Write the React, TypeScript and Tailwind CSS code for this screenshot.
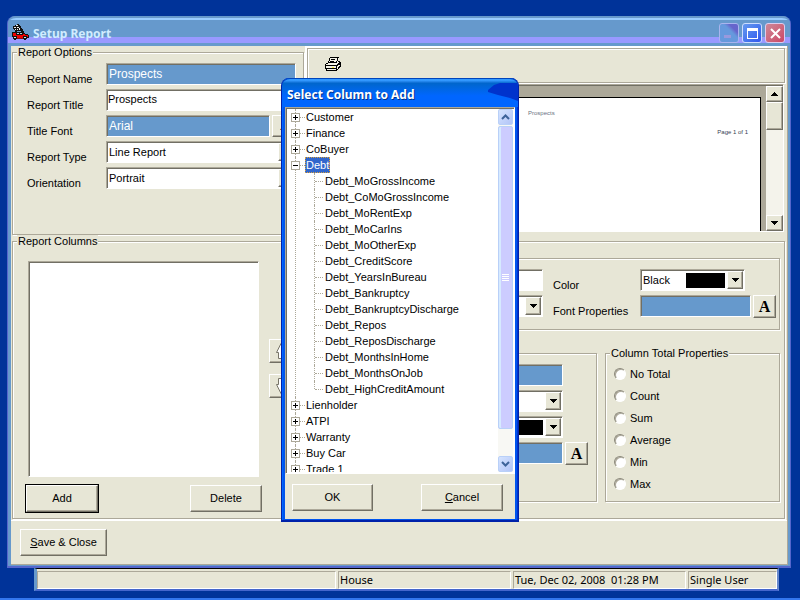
import React from "react";

const sunken =
  "border border-t-[#aca899] border-l-[#aca899] border-r-white border-b-white shadow-[inset_1px_1px_0_#716f64]";
const raised =
  "border border-t-white border-l-white border-r-[#716f64] border-b-[#716f64] shadow-[inset_-1px_-1px_0_#aca899] bg-[#e7e6d6]";
const etched = "border border-[#aca899] shadow-[1px_1px_0_#fff,inset_1px_1px_0_#fff]";

const expandedChildren = [
  "Debt_MoGrossIncome",
  "Debt_CoMoGrossIncome",
  "Debt_MoRentExp",
  "Debt_MoCarIns",
  "Debt_MoOtherExp",
  "Debt_CreditScore",
  "Debt_YearsInBureau",
  "Debt_Bankruptcy",
  "Debt_BankruptcyDischarge",
  "Debt_Repos",
  "Debt_ReposDischarge",
  "Debt_MonthsInHome",
  "Debt_MonthsOnJob",
  "Debt_HighCreditAmount",
];

const tree: { name: string; children?: string[] }[] = [
  { name: "Customer" },
  { name: "Finance" },
  { name: "CoBuyer" },
  { name: "Debt", children: expandedChildren },
  { name: "Lienholder" },
  { name: "ATPI" },
  { name: "Warranty" },
  { name: "Buy Car" },
  { name: "Trade 1" },
];

const totals = ["No Total", "Count", "Sum", "Average", "Min", "Max"];

function Triangle({ up = false }: { up?: boolean }) {
  return (
    <svg width="7" height="4" viewBox="0 0 7 4" shapeRendering="crispEdges" aria-hidden="true">
      <path d={up ? "M3 0h1v1h1v1h1v1h1v1H0V3h1V2h1V1h1z" : "M0 0h7v1H6v1H5v1H4v1H3V3H2V2H1V1H0z"} fill="#000" />
    </svg>
  );
}

function Field({ id, value = "", label, blue = false }: { id: string; value?: string; label?: string; blue?: boolean }) {
  return (
    <input
      id={id}
      aria-label={label}
      defaultValue={value}
      className={`${sunken} h-[22px] min-w-0 flex-1 rounded-none outline-none ${
        blue ? "bg-[#6699cc] px-0.5 text-xs text-white" : "bg-white px-px pb-0.5"
      }`}
    />
  );
}

function Select({ id, value = "", label, swatch = false }: { id: string; value?: string; label?: string; swatch?: boolean }) {
  return (
    <div className={`${sunken} relative flex h-[22px] min-w-0 flex-1 bg-white p-px`}>
      <select id={id} aria-label={label} className="min-w-0 flex-1 appearance-none rounded-none pl-px outline-none">
        <option>{value}</option>
      </select>
      {swatch && <span className="pointer-events-none absolute top-[3px] right-[19px] h-[15px] w-[39px] bg-black" />}
      <span className={`${raised} pointer-events-none flex w-4 items-center justify-center`}>
        <Triangle />
      </span>
    </div>
  );
}

function FontButton({ label }: { label: string }) {
  return (
    <button
      aria-label={label}
      className={`${raised} h-[23px] w-[23px] shrink-0 font-['Liberation_Serif',serif] text-base leading-5 font-bold`}
    >
      A
    </button>
  );
}

function Row({ id, label, children }: { id: string; label: string; children: React.ReactNode }) {
  return (
    <div className="flex h-[22px]">
      <label htmlFor={id} className="w-[79px] shrink-0 pt-2.5 leading-3">
        {label}
      </label>
      {children}
    </div>
  );
}

function Group({ legend, className, children }: { legend: string; className: string; children: React.ReactNode }) {
  return (
    <fieldset className={`${etched} min-w-0 ${className}`}>
      <legend className="ml-1 bg-[#e7e6d6] px-px leading-[13px]">{legend}</legend>
      {children}
    </fieldset>
  );
}

function CarIcon() {
  return (
    <svg width="17" height="17" viewBox="0 0 17 17" shapeRendering="crispEdges" aria-hidden="true">
      <path d="M1 2h2V1h2V0h2v1h1v1h1v2h1v1h1v2h1v2H9V7H3V6H2V5H1z" fill="#111" />
      <path d="M2 3h2v1H2zM4 1h2v1H4zM3 5h1v1H3zM5 3h2v1H5zM5 5h1v1H5zM7 4h1v2H7z" fill="#eee" />
      <path d="M0 8h3V7h2v1h5V7h1v2h2v1h3v1h1v3H1v-1H0z" fill="#111" />
      <path d="M1 9h3v2h7v-1h2v1h3v2H1z" fill="#f00000" />
      <path d="M5 9h2v1H5zM8 9h2v1H8z" fill="#bcd" />
      <path d="M5 13h6v1H5z" fill="#f00000" />
      <path d="M1 12h4v3H4v1H2v-1H1zM11 12h4v3h-1v1h-2v-1h-1z" fill="#111" />
      <path d="M2 13h2v1H2zM12 13h2v1h-2z" fill="#ddd" />
      <path d="M5 14h6v1H5z" fill="#811" />
    </svg>
  );
}

function PrinterIcon() {
  return (
    <svg width="17" height="15" viewBox="0 0 17 15" shapeRendering="crispEdges" aria-hidden="true">
      <path d="M5 1h9v2h-1v2h3v4h-1v2h-1v1h-1v1h-1v1H2v-1H1v-1H0V8h1V6h2V4h1V2h1z" fill="#f4f3e8" />
      <path
        d="M5.500 .5h8l-1 1v2l-1 1v1h-8v-1l1-1v-2zM3.500 5.500l-3 2v1h11l3-3v-1h-2M.5 8.500v3h11v-3M1.500 11.500v2h10v-2M11.500 8.500l4-3v4l-4 4M12.500 11.500l2-2"
        fill="none"
        stroke="#000"
      />
      <path d="M6 2h4v1H6zM5 4h4v1H5zM12 8h1v1h-1zM14 7h1v1h-1z" fill="#000" />
      <path d="M7 10h2v1H7z" fill="#ffee33" />
    </svg>
  );
}

function Arrow({ up = false }: { up?: boolean }) {
  return (
    <svg width="14" height="18" viewBox="0 0 14 18" aria-hidden="true">
      <path
        d={up ? "M7 1.500 2.500 10.500h2v6h5v-6h2z" : "M7 16.500 2.500 7.500h2v-6h5v6h2z"}
        fill="#fff"
        stroke="#777468"
      />
    </svg>
  );
}

function ToggleBox({ open, name }: { open: boolean; name: string }) {
  return (
    <button aria-label={`${open ? "Collapse" : "Expand"} ${name}`} className="z-10 size-[9px] bg-white">
      <svg width="9" height="9" viewBox="0 0 9 9" shapeRendering="crispEdges" aria-hidden="true">
        <path d="M0 0h9v9H0zM1 1v7h7V1z" fill="#aca899" fillRule="evenodd" />
        <path d={open ? "M2 4h5v1H2z" : "M2 4h5v1H2zM4 2h1v5H4z"} fill="#000" />
      </svg>
    </button>
  );
}

function Chevron({ up = false }: { up?: boolean }) {
  return (
    <button
      aria-label={up ? "Scroll up" : "Scroll down"}
      className="flex h-4 w-[15px] shrink-0 items-center justify-center rounded-[2px] border border-[#b9d0f8] bg-linear-to-br from-[#d5e4ff] to-[#b2c4f7]"
    >
      <svg width="9" height="6" viewBox="0 0 9 6" aria-hidden="true">
        <path d={up ? "M1 5 4.500 1.500 8 5" : "M1 1 4.500 4.500 8 1"} fill="none" stroke="#3d6399" strokeWidth="2" />
      </svg>
    </button>
  );
}

function ColumnTree() {
  return (
    <div className={`${sunken} flex h-[367px] bg-white p-px`}>
      <ul role="tree" aria-label="Columns" className="min-w-0 flex-1 overflow-hidden pl-1 leading-4">
        {tree.map((node) => (
          <li key={node.name} role="treeitem" aria-expanded={!!node.children} className="relative">
            <span className="absolute top-0 bottom-0 left-1 border-l border-dotted border-[#aca899]" />
            <div className="flex h-4 items-center">
              <ToggleBox open={!!node.children} name={node.name} />
              <span className="w-[5px] border-t border-dotted border-[#aca899]" />
              <span
                className={
                  node.children
                    ? "bg-[#3166cc] px-px text-white outline-1 -outline-offset-1 outline-dotted outline-[#d8a040]"
                    : "px-px"
                }
              >
                {node.name}
              </span>
            </div>
            {node.children && (
              <ul role="group" className="pl-[23px]">
                {node.children.map((child, i) => (
                  <li key={child} role="treeitem" className="flex h-4 items-center">
                    <span
                      className={`border-l border-dotted border-[#aca899] ${
                        i === expandedChildren.length - 1 ? "h-2 self-start" : "h-4"
                      }`}
                    />
                    <span className="mr-px w-2 border-t border-dotted border-[#aca899]" />
                    <span className="pl-px">{child}</span>
                  </li>
                ))}
              </ul>
            )}
          </li>
        ))}
      </ul>
      <div className="flex w-[15px] flex-col bg-[#f8f8f4]">
        <Chevron up />
        <div className="mt-px flex h-[303px] flex-col items-center justify-center gap-px rounded-[2px] border border-[#b9d0f8] bg-[#ccccff] shadow-[inset_2px_0_0_#d6eaff]">
          <span className="h-px w-[7px] bg-white" />
          <span className="h-px w-[7px] bg-white" />
          <span className="h-px w-[7px] bg-white" />
          <span className="h-px w-[7px] bg-white" />
        </div>
        <div className="flex-1" />
        <Chevron />
      </div>
    </div>
  );
}

function ColumnDialog() {
  return (
    <section
      role="dialog"
      aria-label="Select Column to Add"
      className="absolute top-[78px] left-[281px] z-20 w-[238px] rounded-t-lg border-x border-b-2 border-[#0022aa] bg-[#0055ee] px-[3px] pb-px shadow-[inset_1px_0_0_#0066ff,inset_-1px_0_0_#0033cc]"
    >
      <header className="relative -mx-[3px] flex h-[29px] items-center overflow-hidden rounded-t-lg border-t border-[#0044bb] bg-linear-to-b from-[#3399ff] from-5% via-[#0066cc] via-15% to-[#0066ff] to-60% pt-1 pl-[5px]">
        <svg className="absolute top-1 right-0" width="32" height="20" viewBox="0 0 32 20" aria-hidden="true">
          <path d="M2 7 8 2 14 0h18v18l-8-3-12-3-10-3z" fill="#0033cc" />
        </svg>
        <h2 className="relative font-['Noto_Sans','Open_Sans',sans-serif] text-xs leading-4 font-bold text-white [text-shadow:1px_1px_0_#003388]">
          Select Column to Add
        </h2>
      </header>
      <div className="bg-[#e7e6d6]">
        <ColumnTree />
        <div className="flex justify-between pt-2.5 pr-3 pb-2 pl-[7px]">
          <button className={`${raised} h-[27px] w-[81px]`}>OK</button>
          <button className={`${raised} h-[27px] w-[82px]`}>
            <u>C</u>ancel
          </button>
        </div>
      </div>
    </section>
  );
}

function TitleBar() {
  return (
    <header className="flex h-[30px] items-center rounded-t-lg border-t-2 border-[#6699cc] bg-[linear-gradient(to_bottom,#99ccff_0_2px,#6699cc_2px_19px,#9999ff_19px_25px,#6699cc_25px)] pr-[5px] pl-1">
      <CarIcon />
      <h1 className="ml-1 flex-1 pt-1 font-['Noto_Sans','Open_Sans',sans-serif] text-xs leading-4 font-bold text-[#d0ecff]">
        Setup Report
      </h1>
      <div className="flex gap-[3px] pt-0.5">
        <button
          aria-label="Minimize"
          className="flex size-5 items-end rounded-[3px] border border-[#a9b4ee] bg-linear-to-bl from-[#6666cc] from-25% to-[#6699dd] to-40% p-1"
        >
          <span className="h-[3px] w-[7px] bg-[#9999dd]" />
        </button>
        <button
          aria-label="Maximize"
          className="flex size-5 items-center justify-center rounded-[3px] border border-[#ccddff] bg-linear-to-br from-[#6699ee] to-[#3355ee]"
        >
          <span className="h-[11px] w-[11px] border border-t-[3px] border-white" />
        </button>
        <button
          aria-label="Close"
          className="flex size-5 items-center justify-center rounded-[3px] border border-[#ddccee] bg-linear-to-br from-[#cc8899] to-[#cc4466]"
        >
          <svg width="13" height="13" viewBox="0 0 13 13" aria-hidden="true">
            <path d="m2 2 9 9m0-9-9 9" stroke="#fff" strokeWidth="2" />
          </svg>
        </button>
      </div>
    </header>
  );
}

function Preview() {
  return (
    <div className={`${sunken} mt-px mr-[3px] flex h-[148px] bg-[#aca899] pt-px pl-px`}>
      <div className="mt-[11px] ml-3 flex-1 border border-b-0 border-black bg-white px-3 pt-3 text-[6px] leading-[7px] text-gray-500">
        <p className="pl-[194px]">Prospects</p>
        <p className="mt-3 text-right text-gray-700">Page 1 of 1</p>
      </div>
      <div className="ml-[5px] flex w-[17px] flex-col bg-[#f4f3eb]">
        <button aria-label="Preview up" className={`${raised} flex h-4 items-center justify-center`}>
          <Triangle up />
        </button>
        <div className={`${raised} h-7`} />
        <div className="flex-1" />
        <button aria-label="Preview down" className={`${raised} flex h-4 items-center justify-center`}>
          <Triangle />
        </button>
      </div>
    </div>
  );
}

function ReportOptions() {
  return (
    <Group legend="Report Options" className="w-[292px] shrink-0">
      <div className="flex flex-col gap-1 pt-1 pr-[7px] pl-3.5">
        <Row id="name" label="Report Name">
          <Field id="name" value="Prospects" blue />
        </Row>
        <Row id="title" label="Report Title">
          <Field id="title" value="Prospects" />
        </Row>
        <Row id="font" label="Title Font">
          <Field id="font" value="Arial" blue />
          <button aria-label="Choose title font" className={`${raised} ml-0.5 w-6`}>
            ...
          </button>
        </Row>
        <Row id="type" label="Report Type">
          <Select id="type" value="Line Report" />
        </Row>
        <Row id="orientation" label="Orientation">
          <Select id="orientation" value="Portrait" />
        </Row>
      </div>
    </Group>
  );
}

function ReportColumns() {
  return (
    <Group legend="Report Columns" className="w-[292px] shrink-0">
      <div className="flex gap-2.5 pt-[13px] pl-[15px]">
        <select size={2} aria-label="Report Columns" className={`${sunken} h-[216px] w-[231px] rounded-none bg-white outline-none`} />
        <div className="flex flex-col gap-[11px] pt-[78px]">
          <button aria-label="Move up" className={`${raised} flex size-6 items-center justify-center`}>
            <Arrow up />
          </button>
          <button aria-label="Move down" className={`${raised} flex size-6 items-center justify-center`}>
            <Arrow />
          </button>
        </div>
      </div>
      <div className="flex justify-between pt-2 pr-[41px] pb-1.5 pl-[13px]">
        <button className={`${raised} h-[27px] w-[72px] outline-1 outline-black`}>Add</button>
        <button className={`${raised} h-[27px] w-[72px]`}>Delete</button>
      </div>
    </Group>
  );
}

function ColumnProperties() {
  return (
    <div className={`${etched} mt-1.5 min-w-0 flex-1 pt-4 pr-1 pl-1.5`}>
      <div className={`${etched} grid h-[72px] grid-cols-[1fr_77px_136px] content-start gap-x-2.5 gap-y-1 pt-2.5 pr-[3px]`}>
        <div className="flex pl-3">
          <Field id="caption" label="Caption" />
        </div>
        <label htmlFor="color" className="pt-2.5 leading-3">
          Color
        </label>
        <div className="flex pr-[31px]">
          <Select id="color" value="Black" swatch />
        </div>
        <div className="flex pl-3">
          <Select id="align" label="Alignment" />
        </div>
        <label htmlFor="fontprops" className="pt-2.5 leading-3">
          Font Properties
        </label>
        <div className="flex gap-0.5">
          <Field id="fontprops" blue />
          <FontButton label="Choose font" />
        </div>
      </div>
      <div className="mt-[17px] flex gap-2">
        <div className={`${etched} mt-1.5 flex min-w-0 flex-1 flex-col gap-1 pt-2.5 pr-2 pl-3`}>
          <div className="flex pr-[25px]">
            <Field id="header" label="Header" blue />
          </div>
          <div className="flex pr-[25px]">
            <Select id="headeralign" label="Header alignment" />
          </div>
          <div className="flex pr-[25px]">
            <Select id="headercolor" label="Header color" swatch />
          </div>
          <div className="flex gap-0.5">
            <Field id="headerfont" label="Header font" blue />
            <FontButton label="Choose header font" />
          </div>
        </div>
        <Group legend="Column Total Properties" className="h-[155px] w-[175px] shrink-0">
          <div className="flex flex-col gap-2 pt-[7px] pl-2">
            {totals.map((name) => (
              <label key={name} className="flex h-3.5 items-center gap-1 leading-[14px]">
                <input
                  type="radio"
                  name="total"
                  className="size-3 appearance-none rounded-full border border-t-[#8b887a] border-r-white border-b-white border-l-[#8b887a] bg-white shadow-[inset_1px_1px_0_#aca899]"
                />
                {name}
              </label>
            ))}
          </div>
        </Group>
      </div>
    </div>
  );
}

function StatusBar() {
  const cell = "border border-t-[#aca899] border-l-[#aca899] border-r-white border-b-white pl-px truncate whitespace-pre";
  return (
    <footer className="mr-[21px] ml-[34px] flex h-[23px] gap-0.5 border-t border-r-2 border-b-2 border-l-[3px] border-t-black border-r-[#6688cc] border-b-[#4466cc] border-l-[#6699cc] bg-[#e7e6d6] pt-0.5 font-['Noto_Sans',sans-serif] leading-4">
      <div className={`${cell} flex-1`} />
      <div className={`${cell} w-[173px]`}>House</div>
      <div className={`${cell} w-[173px]`}>Tue, Dec 02, 2008  01:28 PM</div>
      <div className={`${cell} w-[89px]`}>Single User</div>
    </footer>
  );
}

export default function App() {
  return (
    <div className="relative flex min-h-screen flex-col border-b-2 border-[#3377ee] bg-[#003399] pt-4 font-['Liberation_Sans',Arial,sans-serif] text-[11px] text-black">
      <main className="mr-[9px] ml-[7px] rounded-t-lg border-x border-b-2 border-[#5566cc] bg-[#6699cc]">
        <TitleBar />
        <div className="mr-0.5 mb-px ml-[3px] border-r border-b border-[#aca899] bg-[#e7e6d6]">
          <div className="flex h-[189px] gap-px pl-px">
            <ReportOptions />
            <div className="min-w-0 flex-1 border-t-2 border-l-2 border-white">
              <div className={`${etched} mr-0.5 h-[35px] pt-2 pl-[17px]`}>
                <button aria-label="Print" className="block">
                  <PrinterIcon />
                </button>
              </div>
              <Preview />
            </div>
          </div>
          <div className="flex gap-0.5 pr-0.5 pl-px">
            <ReportColumns />
            <ColumnProperties />
          </div>
          <div className="mt-px border-t border-white px-[9px] pt-2 pb-2">
            <button className={`${raised} block h-[27px] w-[87px]`}>
              <u>S</u>ave &amp; Close
            </button>
          </div>
        </div>
      </main>
      <StatusBar />
      <ColumnDialog />
    </div>
  );
}
